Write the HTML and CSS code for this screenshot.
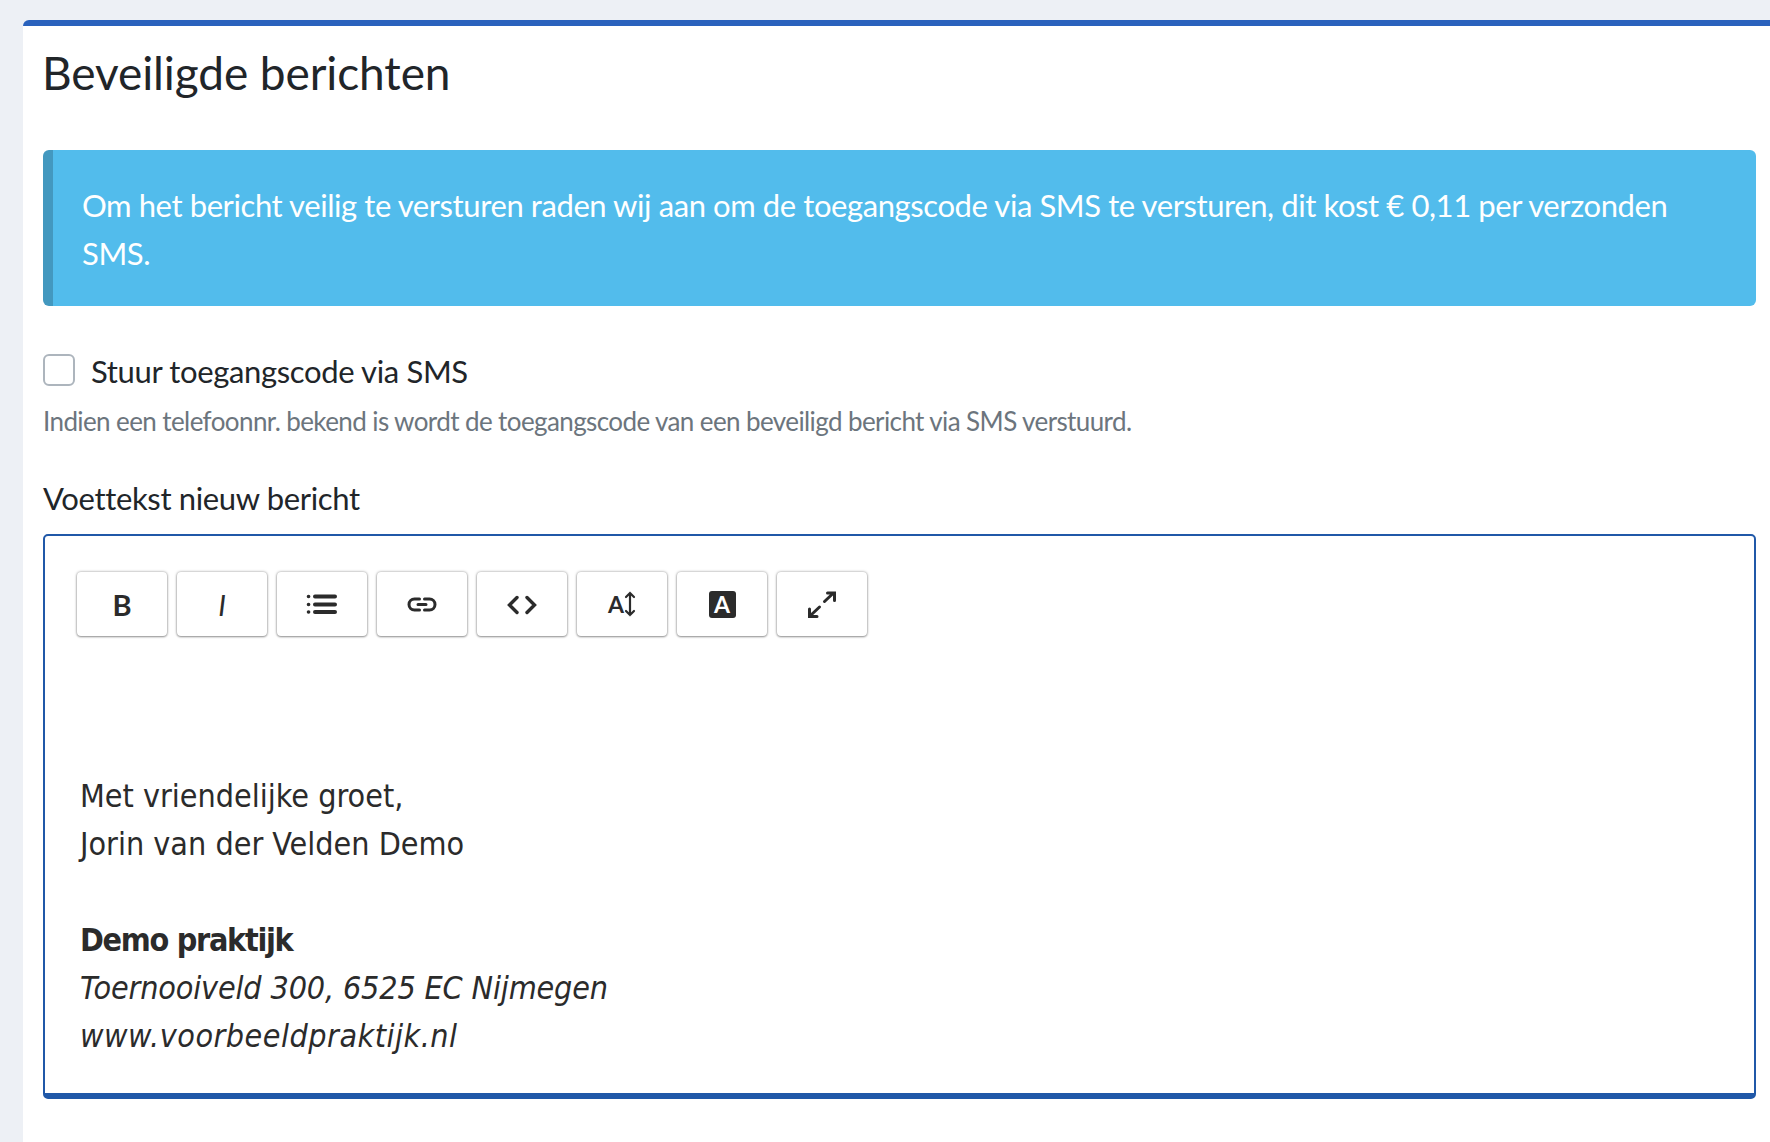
FILE: index.html
```html
<!DOCTYPE html>
<html lang="nl">
<head>
<meta charset="utf-8">
<title>Beveiligde berichten</title>
<link rel="stylesheet" href="styles.css">
</head>
<body>
<main class="card">
  <h1 class="title">Beveiligde berichten</h1>
  <div class="alert">Om het bericht veilig te versturen raden wij aan om de toegangscode via SMS te versturen, dit kost € 0,11 per verzonden SMS.</div>
  <label class="check-row">
    <input class="check" type="checkbox">
    <span class="check-text">Stuur toegangscode via SMS</span>
  </label>
  <p class="hint">Indien een telefoonnr. bekend is wordt de toegangscode van een beveiligd bericht via SMS verstuurd.</p>
  <div class="field-label">Voettekst nieuw bericht</div>
  <section class="editor">
    <div class="toolbar">
      <button class="tool tool-b" type="button">B</button>
      <button class="tool tool-i" type="button">I</button>
      <button class="tool" type="button" aria-label="Lijst"><svg class="icon" viewBox="0 0 36 36"><path d="M11 10.500H31M11 18.500H31M11 26H31" stroke-width="4"/><path d="M4.500 10.500h.1M4.500 18.500h.1M4.500 26h.1" stroke-width="3.600"/></svg></button>
      <button class="tool" type="button" aria-label="Link"><svg class="icon" viewBox="0 0 36 36"><path d="M15.500 13h-5a5.500 5.500 0 0 0 0 11h5M20.500 13h5a5.500 5.500 0 0 1 0 11h-5M14 18.500h8" stroke-width="3"/></svg></button>
      <button class="tool" type="button" aria-label="Code"><svg class="icon" viewBox="0 0 36 36"><path d="M13 11.500 5.500 19l7.500 7.500M23 11.500l7.500 7.500-7.500 7.500" stroke-width="3.400"/></svg></button>
      <button class="tool" type="button"><span class="size-a">A</span><svg class="size-arrow" viewBox="0 0 12 26"><path d="M6 2V24M2 6 6 2l4 4M2 20l4 4 4-4" stroke-width="2.200"/></svg></button>
      <button class="tool" type="button"><span class="invert-a">A</span></button>
      <button class="tool" type="button" aria-label="Volledig scherm"><svg class="icon" viewBox="0 0 36 36"><path d="M20.500 15.500 29 7.500M23.500 7h7v7.500M15.500 21 6.500 29.500M5.500 23v7.500h7.500" stroke-width="3"/></svg></button>
    </div>
    <div class="content">
      <p>Met vriendelijke groet,</p>
      <p>Jorin van der Velden Demo</p>
      <p class="blank">&nbsp;</p>
      <p><strong>Demo praktijk</strong></p>
      <p><em>Toernooiveld 300, 6525 EC Nijmegen</em></p>
      <p><em class="url">www.voorbeeldpraktijk.nl</em></p>
    </div>
  </section>
</main>
</body>
</html>
```
FILE: styles.css
```css
* { box-sizing: border-box; }
html, body { margin: 0; height: 100%; }
body {
  background: #edf0f5;
  padding: 20px 0 0 23px;
  font-family: "Lato", "Liberation Sans", sans-serif;
  color: #212529;
  overflow: hidden;
}
.card {
  background: #fff;
  border-top: 6px solid #2a62bd;
  border-top-left-radius: 6px;
  padding: 20px 14px 0 20px;
  height: 100%;
}
.title {
  margin: 0 0 50px;
  font-size: 46px;
  letter-spacing: -.1px;
  text-indent: -1px;
  line-height: 54px;
  font-weight: 400;
}
.alert {
  background: #52bcec;
  border-left: 10px solid #4398bf;
  border-radius: 6px;
  padding: 31px 30px 29px 29px;
  color: #fff;
  font-size: 31px;
  letter-spacing: -.41px;
  line-height: 48px;
}
.check-row {
  display: flex;
  align-items: center;
  gap: 16px;
  margin-top: 40px;
  font-size: 31px;
  letter-spacing: -.35px;
  line-height: 46px;
}
.check-text { padding-top: 2px; }
.check {
  appearance: none;
  margin: 0;
  flex: none;
  width: 32px;
  height: 32px;
  background: #fff;
  border: 2px solid #adb5bd;
  border-radius: 6px;
}
.hint {
  margin: 7px 0 0;
  font-size: 26px;
  letter-spacing: -.6px;
  line-height: 40px;
  color: #6c757d;
}
.field-label {
  margin-top: 33px;
  font-size: 31px;
  letter-spacing: -.35px;
  line-height: 48px;
}
.editor {
  margin-top: 12px;
  height: 565px;
  border: 2px solid #2058a8;
  border-bottom-width: 6px;
  border-radius: 5px;
  padding: 36px 32px 0;
}
.toolbar { display: flex; gap: 10px; }
.tool {
  flex: none;
  display: flex;
  align-items: center;
  justify-content: center;
  width: 90px;
  height: 64px;
  padding: 0;
  background: #fff;
  border: 0;
  border-radius: 4px;
  box-shadow: 0 0 3px rgba(0,0,0,.4), 0 1px 2px rgba(0,0,0,.3);
  color: #2b2b2b;
  font-family: "Lato", sans-serif;
}
.tool-b { font-size: 29px; font-weight: 700; }
.tool-i { font-size: 29px; font-style: italic; font-weight: 400; }
.icon { width: 36px; height: 36px; }
.icon path, .size-arrow path {
  fill: none;
  stroke: #2b2b2b;
  stroke-linecap: round;
  stroke-linejoin: miter;
}
.size-a { font-size: 23px; font-weight: 700; line-height: 1; }
.size-arrow { width: 12px; height: 26px; }
.invert-a {
  display: flex;
  align-items: center;
  justify-content: center;
  width: 27px;
  height: 27px;
  background: #2b2b2b;
  border-radius: 3px;
  color: #fff;
  font-size: 23px;
  font-weight: 700;
}
.content {
  padding-top: 136px;
  margin-left: 3px;
  font-family: "DejaVu Sans Condensed", "DejaVu Sans", sans-serif;
  font-stretch: condensed;
  font-size: 32px;
  line-height: 48px;
  color: #2b2b2b;
}
.content p { margin: 0; }
.content strong { letter-spacing: -1.3px; }
.content em { letter-spacing: -.15px; }
.content .url { letter-spacing: .5px; }
```
